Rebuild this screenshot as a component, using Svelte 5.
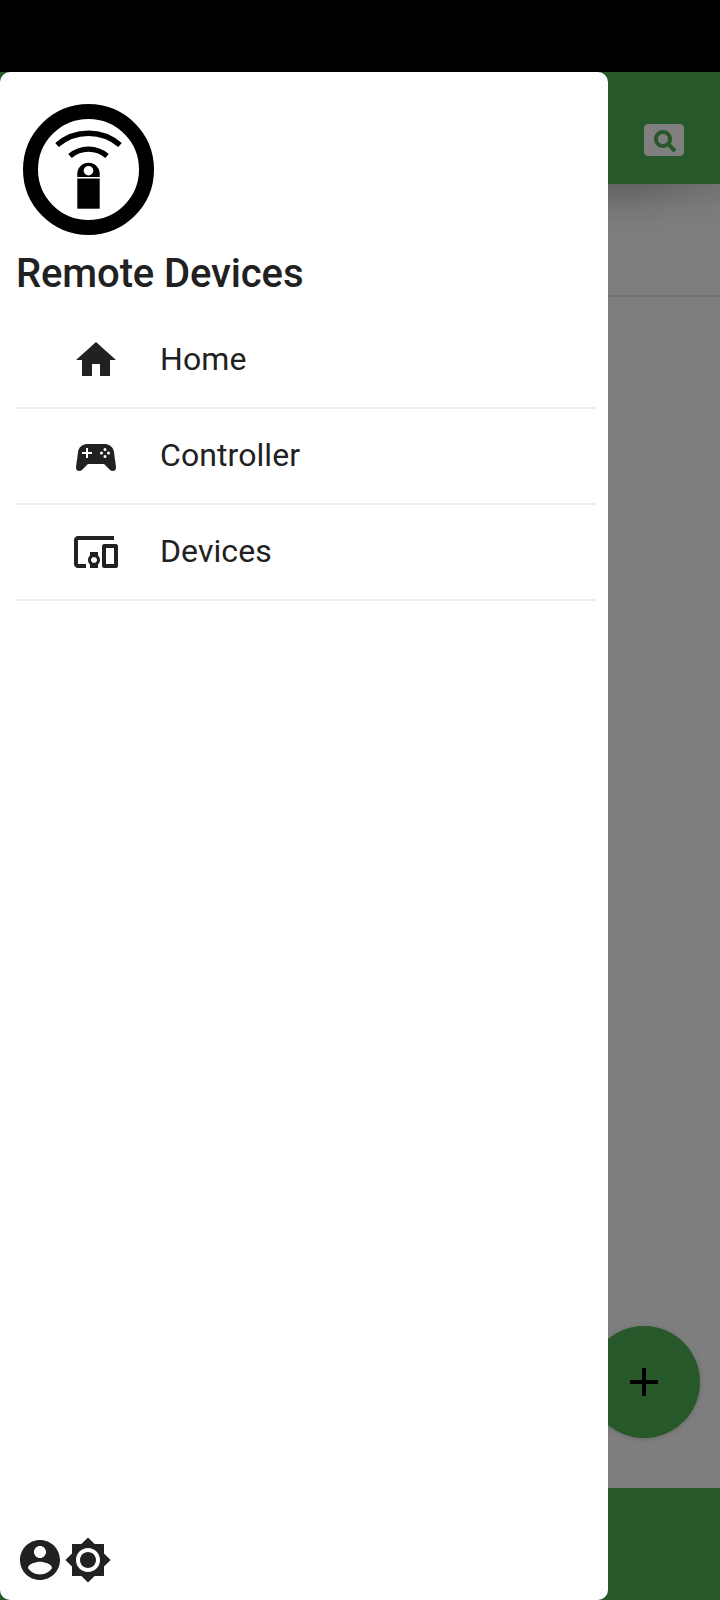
<script>
  const items = [
    { label: 'Home', d: 'M10 20v-6h4v6h5v-8h3L12 3 2 12h3v8z' },
    {
      label: 'Controller',
      d: 'M7.97,16L5,19C4.67,19.3 4.23,19.5 3.75,19.5A1.75,1.75 0 0,1 2,17.75V17.5L3,10.12C3.21,7.81 5.14,6 7.5,6H16.5C18.86,6 20.79,7.81 21,10.12L22,17.5V17.75A1.75,1.75 0 0,1 20.25,19.5C19.77,19.5 19.33,19.3 19,19L16.03,16H7.97M7,8V10H5V11H7V13H8V11H10V10H8V8H7M16.5,8A.75,.75 0 0,0 16.5,9.5A.75,.75 0 0,0 16.5,8M14.75,9.75A.75,.75 0 0,0 14.75,11.25A.75,.75 0 0,0 14.75,9.75M18.25,9.75A.75,.75 0 0,0 18.25,11.25A.75,.75 0 0,0 18.25,9.75M16.5,11.5A.75,.75 0 0,0 16.5,13A.75,.75 0 0,0 16.5,11.5Z'
    },
    {
      label: 'Devices',
      d: 'M3 6h18V4H3c-1.1 0-2 .9-2 2v12c0 1.1.9 2 2 2h4v-2H3V6zm10 6H9v1.78c-.61.55-1 1.33-1 2.22s.39 1.67 1 2.22V20h4v-1.78c.61-.55 1-1.34 1-2.22s-.39-1.67-1-2.22V12zm-2 5.5c-.83 0-1.5-.67-1.5-1.5s.67-1.5 1.5-1.5 1.5.67 1.5 1.5-.67 1.5-1.5 1.5zM22 8h-6c-.5 0-1 .5-1 1v10c0 .5.5 1 1 1h6c.5 0 1-.5 1-1V9c0-.5-.5-1-1-1zm-1 10h-4v-8h4v8z'
    }
  ];
</script>

<div class="screen">
  <div class="status"></div>
  <div class="page">
    <header class="appbar">
      <svg class="icon" viewBox="0 0 24 24"><path d="M11.5 9C10.12 9 9 10.12 9 11.5s1.12 2.5 2.5 2.5 2.5-1.12 2.5-2.5S12.88 9 11.5 9zM20 4H4c-1.1 0-2 .9-2 2v12c0 1.1.9 2 2 2h16c1.1 0 2-.9 2-2V6c0-1.1-.9-2-2-2zm-3.21 14.21l-2.91-2.91c-.69.44-1.51.7-2.39.7C9.01 16 7 13.99 7 11.5S9.01 7 11.5 7 16 9.01 16 11.5c0 .88-.26 1.69-.7 2.39l2.91 2.9-1.42 1.42z" /></svg>
    </header>
    <main class="content">
      <div class="entry"></div>
    </main>
    <footer class="bottombar"></footer>
    <button class="fab" aria-label="Add">
      <svg class="icon" viewBox="0 0 24 24"><path d="M19 13h-6v6h-2v-6H5v-2h6V5h2v6h6v2z" /></svg>
    </button>
    <aside class="drawer">
      <svg class="logo" viewBox="0 0 144 144">
        <circle cx="72.5" cy="73.5" r="58" fill="none" stroke="#000" stroke-width="15" />
        <path d="M41 49A47.9 47.9 0 0 1 104 49" fill="none" stroke="#000" stroke-width="5.4" />
        <path d="M54 60A28.3 28.3 0 0 1 91 60" fill="none" stroke="#000" stroke-width="5.4" />
        <path d="M61.3 81v-3a11.2 11.2 0 0 1 22.4 0v3zM72.5 69.9a4.8 4.8 0 1 0 0 9.6 4.8 4.8 0 0 0 0-9.6z" fill-rule="evenodd" />
        <path d="M61.3 82.5h22.4v30.2H61.3z" />
      </svg>
      <h1>Remote Devices</h1>
      <nav>
        {#each items as item}
          <div class="row">
            <svg class="icon" viewBox="0 0 24 24"><path d={item.d} /></svg>
            <span>{item.label}</span>
          </div>
        {/each}
      </nav>
      <div class="actions">
        <svg class="icon" viewBox="0 0 24 24"><path d="M12 2C6.48 2 2 6.48 2 12s4.48 10 10 10 10-4.48 10-10S17.52 2 12 2zm0 3c1.66 0 3 1.34 3 3s-1.34 3-3 3-3-1.34-3-3 1.34-3 3-3zm0 14.2c-2.5 0-4.71-1.28-6-3.22.03-1.99 4-3.08 6-3.08 1.99 0 5.97 1.09 6 3.08-1.29 1.94-3.5 3.22-6 3.22z" /></svg>
        <svg class="icon" viewBox="0 0 24 24"><path d="M20 8.69V4h-4.69L12 .69 8.69 4H4v4.69L.69 12 4 15.31V20h4.69L12 23.31 15.31 20H20v-4.69L23.31 12 20 8.69zM12 18c-3.31 0-6-2.69-6-6s2.69-6 6-6 6 2.69 6 6-2.69 6-6 6zm0-10c-2.21 0-4 1.79-4 4s1.79 4 4 4 4-1.79 4-4-1.79-4-4-4z" /></svg>
      </div>
    </aside>
  </div>
</div>

<style>
  :global(body) { margin: 0; }
  .screen {
    width: 720px;
    height: 1600px;
    display: flex;
    flex-direction: column;
    overflow: hidden;
    background: #000;
    color: #212121;
    font-family: Roboto, sans-serif;
  }
  .status { height: 72px; flex: none; }
  .page {
    position: relative;
    flex: 1;
    display: flex;
    flex-direction: column;
    background: #7e7e7e;
  }
  .icon { display: block; width: 48px; height: 48px; flex: none; fill: currentColor; }
  .appbar {
    position: relative;
    z-index: 1;
    box-sizing: border-box;
    height: 112px;
    padding: 24px 32px 0 0;
    display: flex;
    align-items: center;
    justify-content: flex-end;
    background: #275829;
    color: #7f7f7f;
  }
  .appbar::after {
    content: '';
    position: absolute;
    top: 100%;
    left: 0;
    right: 0;
    height: 50px;
    background: linear-gradient(rgba(0, 0, 0, 0.21), rgba(0, 0, 0, 0.15) 22%, rgba(0, 0, 0, 0.06) 50%, rgba(0, 0, 0, 0.015) 80%, transparent);
    mask-image: linear-gradient(to right, #000 640px, rgba(0, 0, 0, 0.4) 720px);
  }
  .content { flex: 1; }
  .entry { height: 111px; border-bottom: 2px solid #747474; }
  .bottombar { height: 112px; background: #275829; }
  .fab {
    position: absolute;
    right: 20px;
    bottom: 162px;
    width: 112px;
    height: 112px;
    padding: 0;
    border: 0;
    border-radius: 50%;
    display: grid;
    place-items: center;
    background: #275829;
    color: #000;
    box-shadow: 0 1px 5px rgba(0, 0, 0, 0.18);
  }
  .drawer {
    position: absolute;
    z-index: 2;
    inset: 0 auto 0 0;
    width: 608px;
    box-sizing: border-box;
    padding: 24px 12px 16px 16px;
    display: flex;
    flex-direction: column;
    background: #fff;
    border-radius: 10px;
  }
  .page::before {
    content: '';
    position: absolute;
    z-index: 1;
    top: 0;
    left: 0;
    width: 20px;
    height: 100%;
    background: #275829;
  }
  .logo { display: block; width: 144px; height: 144px; }
  h1 { margin: 10px 0 0; font-size: 40px; line-height: 47px; font-weight: 500; letter-spacing: -0.12px; white-space: nowrap; }
  nav { margin-top: 16px; }
  .row {
    box-sizing: border-box;
    height: 96px;
    padding-left: 56px;
    display: flex;
    align-items: center;
    gap: 40px;
    border-bottom: 2px solid #eee;
    font-size: 32px;
    line-height: 38px;
  }
  .row span { padding-bottom: 2px; letter-spacing: 0.08px; }
  .actions { margin-top: auto; display: flex; }
</style>
